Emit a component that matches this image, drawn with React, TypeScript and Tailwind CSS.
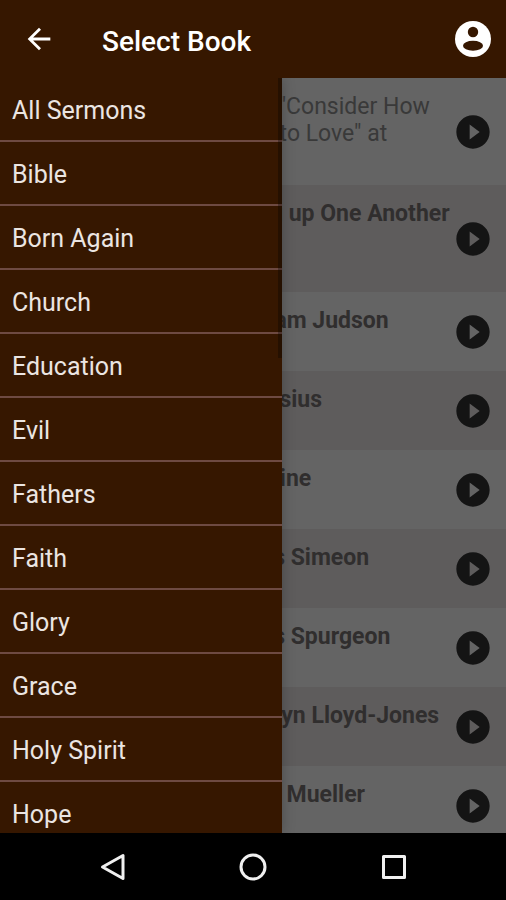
import { MdArrowBack, MdPlayCircleFilled } from "react-icons/md";

const books = [
  "All Sermons",
  "Bible",
  "Born Again",
  "Church",
  "Education",
  "Evil",
  "Fathers",
  "Faith",
  "Glory",
  "Grace",
  "Holy Spirit",
  "Hope",
];

const sermons = [
  { title: 'Pastor "Consider How Others to Love" at', tall: true, played: true },
  { title: "Stirring up One Another", tall: true },
  { title: "Adoniram Judson" },
  { title: "Athanasius" },
  { title: "Augustine" },
  { title: "Charles Simeon" },
  { title: "Charles Spurgeon" },
  { title: "D. Martyn Lloyd-Jones" },
  { title: "George Mueller" },
];

function AccountIcon() {
  return (
    <svg viewBox="0 0 36 36" className="h-9 w-9" aria-hidden="true">
      <circle cx="18" cy="18" r="18" fill="#fff" />
      <circle cx="18" cy="11" r="5.2" fill="#361700" />
      <ellipse cx="18" cy="24.8" rx="10" ry="5" fill="#361700" />
    </svg>
  );
}

function Header() {
  return (
    <header className="flex h-[78px] shrink-0 items-center bg-[#361700] pr-[15px] pl-[22px] text-white">
      <button type="button" aria-label="Back">
        <MdArrowBack className="h-[34px] w-[34px]" />
      </button>
      <h1 className="ml-[46px] pt-1.5 text-[28px] leading-8 font-medium">Select Book</h1>
      <button type="button" aria-label="Account" className="ml-auto">
        <AccountIcon />
      </button>
    </header>
  );
}

function SermonList() {
  return (
    <ul className="w-full">
      {sermons.map((sermon) => (
        <li
          key={sermon.title}
          className={`flex pr-[13px] pl-[206px] odd:bg-[#646464] even:bg-[#5e5c5c] ${sermon.tall ? "h-[107px]" : "h-[79px]"}`}
        >
          <p
            className={`min-w-0 flex-1 pt-[15px] text-[23px] leading-[27px] ${sermon.played ? "text-[#393939]" : "font-bold text-[#302e2e]"}`}
          >
            {sermon.title}
          </p>
          <button type="button" aria-label={`Play ${sermon.title}`} className="self-center text-[#141414]">
            <MdPlayCircleFilled className="h-10 w-10" />
          </button>
        </li>
      ))}
    </ul>
  );
}

function Drawer() {
  return (
    <nav className="absolute inset-y-0 left-0 w-[282px] bg-[#361700] shadow-[0_0_12px_rgba(0,0,0,0.25)]">
      <ul>
        {books.map((book) => (
          <li key={book} className="h-16 border-b-2 border-[#6e4a42]">
            <a href="#" className="flex h-full items-center pt-1 pl-3 text-[25px] text-[#ebe5e2]">
              {book}
            </a>
          </li>
        ))}
      </ul>
      {/* Scroll thumb */}
      <div className="absolute top-0 right-0 h-[280px] w-1 bg-black/30" />
    </nav>
  );
}

function SystemBar() {
  return (
    <footer className="grid h-[67px] shrink-0 grid-cols-3 place-items-center bg-black px-[42px]">
      <button type="button" aria-label="System back">
        <svg viewBox="0 0 32 32" className="h-8 w-8" fill="none" stroke="#f0f0f0" strokeWidth="3" strokeLinejoin="round">
          <path d="M27 4.5V27.5L6.5 16Z" />
        </svg>
      </button>
      <button type="button" aria-label="Home">
        <svg viewBox="0 0 32 32" className="h-8 w-8" fill="none" stroke="#f0f0f0" strokeWidth="3">
          <circle cx="16" cy="16" r="12" />
        </svg>
      </button>
      <button type="button" aria-label="Recent apps">
        <svg viewBox="0 0 32 32" className="h-8 w-8" fill="none" stroke="#f0f0f0" strokeWidth="3" strokeLinejoin="round">
          <rect x="5.5" y="5.5" width="21" height="21" />
        </svg>
      </button>
    </footer>
  );
}

export default function App() {
  return (
    <div className="flex h-screen flex-col overflow-hidden font-[Roboto,sans-serif]">
      <Header />
      <main className="relative min-h-0 flex-1 overflow-hidden">
        <SermonList />
        <Drawer />
      </main>
      <SystemBar />
    </div>
  );
}
